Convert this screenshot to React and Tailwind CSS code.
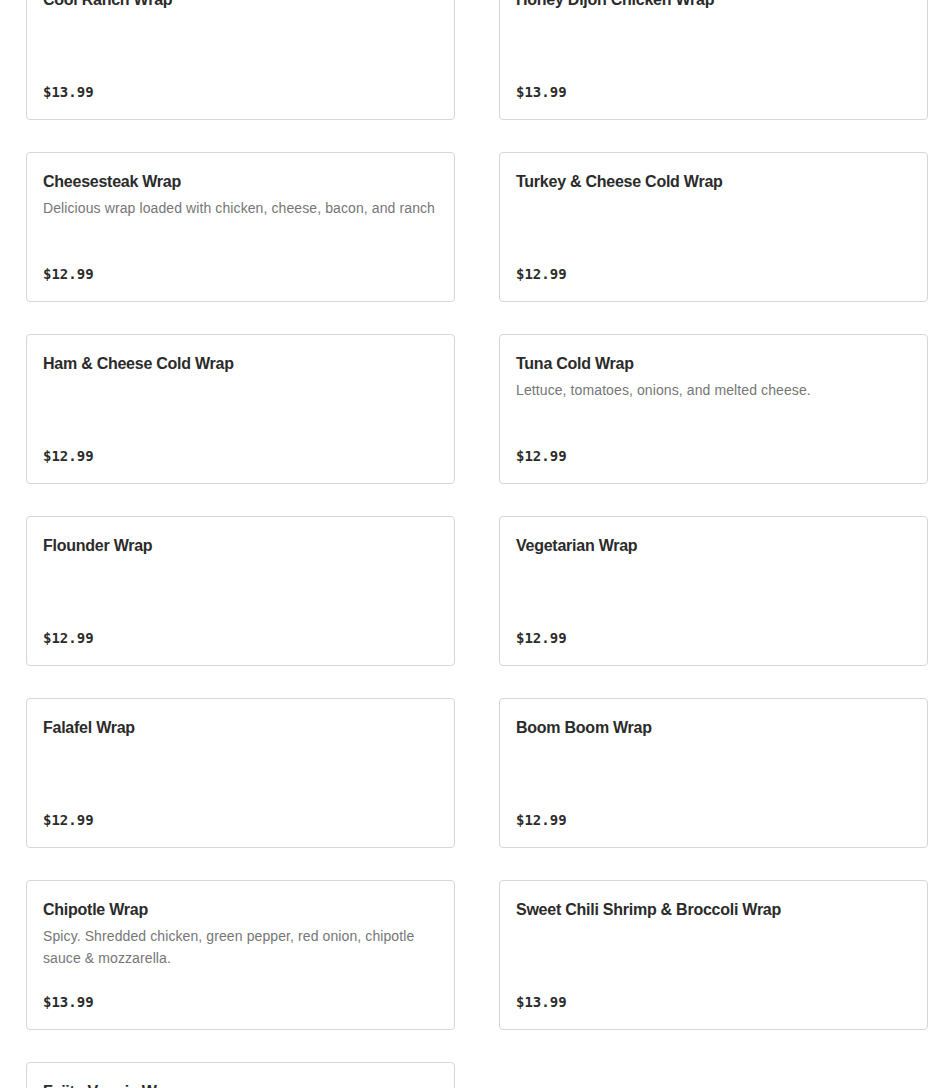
import React from "react";

const items = [
    { name: "Cool Ranch Wrap", price: "$13.99" },
    { name: "Honey Dijon Chicken Wrap", price: "$13.99" },
    { name: "Cheesesteak Wrap", desc: "Delicious wrap loaded with chicken, cheese, bacon, and ranch", price: "$12.99" },
    { name: "Turkey & Cheese Cold Wrap", price: "$12.99" },
    { name: "Ham & Cheese Cold Wrap", price: "$12.99" },
    { name: "Tuna Cold Wrap", desc: "Lettuce, tomatoes, onions, and melted cheese.", price: "$12.99" },
    { name: "Flounder Wrap", price: "$12.99" },
    { name: "Vegetarian Wrap", price: "$12.99" },
    { name: "Falafel Wrap", price: "$12.99" },
    { name: "Boom Boom Wrap", price: "$12.99" },
    { name: "Chipotle Wrap", desc: "Spicy. Shredded chicken, green pepper, red onion, chipotle sauce & mozzarella.", price: "$13.99" },
    { name: "Sweet Chili Shrimp & Broccoli Wrap", price: "$13.99" },
    { name: "Fajita Veggie Wrap", price: "$12.99" },
];

function MenuCard({ name, desc, price }) {
    return (
        <div className="h-[150px] flex flex-col justify-between border border-[#d6d6d6] rounded-[4px] bg-white px-4 pt-[17px] pb-[17px] cursor-pointer">
            <div>
                <h3 className="text-[16px] leading-6 font-bold tracking-[-0.25px] text-[#2b2b2b]">{name}</h3>
                {desc && (
                    <p className="mt-[3px] text-[14px] leading-[22px] tracking-[0.1px] text-[#767676]">{desc}</p>
                )}
            </div>
            <span className="text-[14px] leading-5 font-bold text-[#2b2b2b] font-['DejaVu_Sans_Mono',monospace]">
                {price}
            </span>
        </div>
    );
}

export default function App() {
    return (
        <div className="min-h-screen bg-white overflow-hidden font-['Liberation_Sans',Arial,sans-serif]">
            <div className="pl-[26px] pr-[22px] -mt-[30px] grid grid-cols-2 gap-x-[44px] gap-y-[32px]">
                {items.map((item) => (
                    <MenuCard key={item.name} {...item} />
                ))}
            </div>
        </div>
    );
}
